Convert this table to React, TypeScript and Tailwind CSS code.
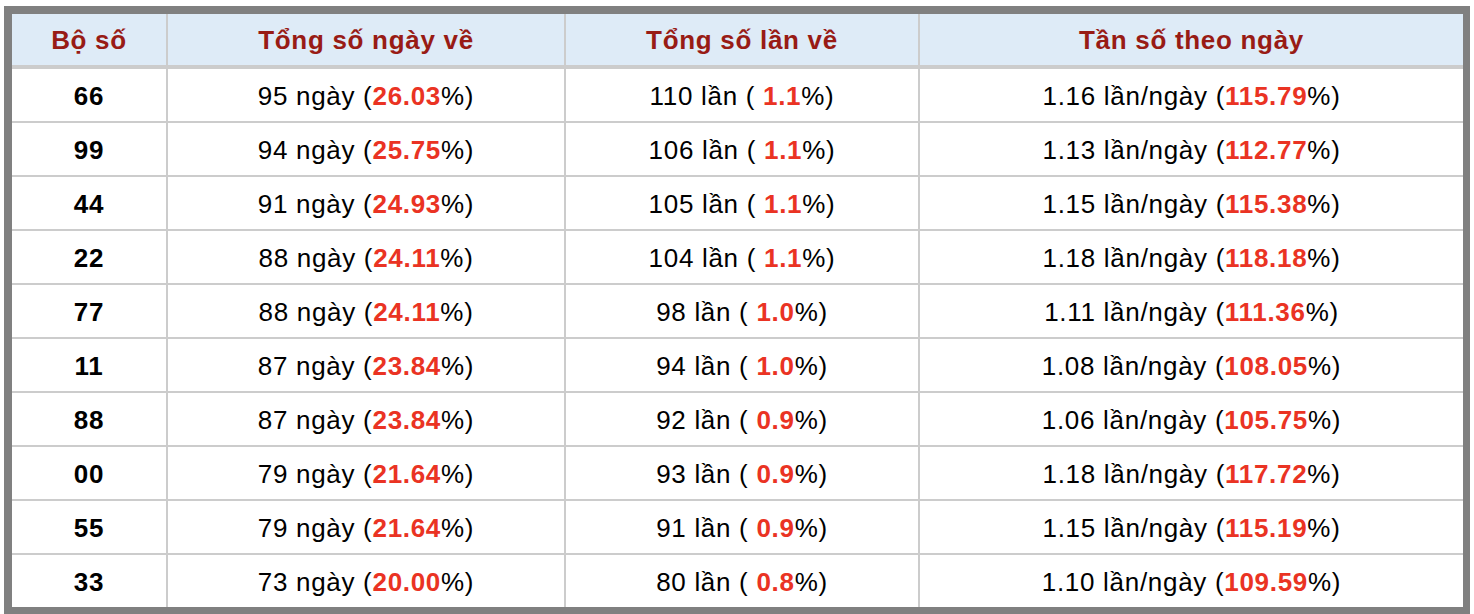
import React from "react";

type Row = {
  bo: string;
  days: string;
  dayPct: string;
  times: string;
  timesPct: string;
  freq: string;
  freqPct: string;
};

const rows: Row[] = [
  { bo: "66", days: "95", dayPct: "26.03", times: "110", timesPct: "1.1", freq: "1.16", freqPct: "115.79" },
  { bo: "99", days: "94", dayPct: "25.75", times: "106", timesPct: "1.1", freq: "1.13", freqPct: "112.77" },
  { bo: "44", days: "91", dayPct: "24.93", times: "105", timesPct: "1.1", freq: "1.15", freqPct: "115.38" },
  { bo: "22", days: "88", dayPct: "24.11", times: "104", timesPct: "1.1", freq: "1.18", freqPct: "118.18" },
  { bo: "77", days: "88", dayPct: "24.11", times: "98", timesPct: "1.0", freq: "1.11", freqPct: "111.36" },
  { bo: "11", days: "87", dayPct: "23.84", times: "94", timesPct: "1.0", freq: "1.08", freqPct: "108.05" },
  { bo: "88", days: "87", dayPct: "23.84", times: "92", timesPct: "0.9", freq: "1.06", freqPct: "105.75" },
  { bo: "00", days: "79", dayPct: "21.64", times: "93", timesPct: "0.9", freq: "1.18", freqPct: "117.72" },
  { bo: "55", days: "79", dayPct: "21.64", times: "91", timesPct: "0.9", freq: "1.15", freqPct: "115.19" },
  { bo: "33", days: "73", dayPct: "20.00", times: "80", timesPct: "0.8", freq: "1.10", freqPct: "109.59" },
];

const cols = "grid grid-cols-[154px_396px_352px_543px] gap-x-[2px]";

function Red({ children }: { children: React.ReactNode }) {
  return <span className="font-bold text-[#ea3323]">{children}</span>;
}

export default function App() {
  return (
    <div
      className="w-[1474px] h-[614px] bg-white overflow-hidden pt-[6px] pl-[4px]"
      style={{ fontFamily: '"Liberation Sans", Arial, Helvetica, sans-serif' }}
    >
      <div className="w-[1466px] border-l-8 border-t-8 border-b-8 border-r-[7px] border-[#808080] bg-[#cccccc]">
        <div className={`${cols} h-[51px] mb-[4px]`}>
          {["Bộ số", "Tổng số ngày về", "Tổng số lần về", "Tần số theo ngày"].map((h) => (
            <div
              key={h}
              className="bg-[#deebf7] flex items-center justify-center pt-[2px] text-[26px] font-bold text-[#981b15] tracking-[0.7px]"
            >
              {h}
            </div>
          ))}
        </div>
        <div className="flex flex-col gap-y-[2px]">
          {rows.map((r) => (
            <div key={r.bo} className={`${cols} h-[52px] text-[26px] text-black tracking-[0.7px]`}>
              <div className="bg-white flex items-center justify-center pt-[3px] font-bold">{r.bo}</div>
              <div className="bg-white flex items-center justify-center pt-[3px]">
                <span>
                  {r.days} ngày (<Red>{r.dayPct}</Red>%)
                </span>
              </div>
              <div className="bg-white flex items-center justify-center pt-[3px]">
                <span>
                  {r.times} lần ( <Red>{r.timesPct}</Red>%)
                </span>
              </div>
              <div className="bg-white flex items-center justify-center pt-[3px]">
                <span>
                  {r.freq} lần/ngày (<Red>{r.freqPct}</Red>%)
                </span>
              </div>
            </div>
          ))}
        </div>
      </div>
    </div>
  );
}
